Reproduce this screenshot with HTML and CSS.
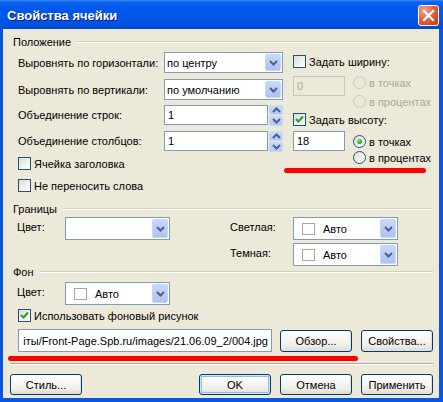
FILE: index.html
```html
<!DOCTYPE html>
<html lang="ru">
<head>
<meta charset="utf-8">
<title>Свойства ячейки</title>
<link rel="stylesheet" href="styles.css">
</head>
<body>
<div class="window">
  <div class="titlebar">
    <span class="title">Свойства ячейки</span>
    <span class="close"><svg width="13" height="13" viewBox="0 0 13 13"><path d="M2 2 L11 11 M11 2 L2 11" stroke="#fff" stroke-width="2.2" stroke-linecap="square"/></svg></span>
  </div>
  <div class="client">
    <section class="group">
      <div class="ghead"><span>Положение</span><i></i></div>
      <div class="pos-body">
        <div class="pos-left">
          <div class="prow r-combo mb6">
            <span class="plabel">Выровнять по горизонтали:</span>
            <div class="combo w119"><span class="val">по центру</span><span class="drop"><svg width="9" height="6" viewBox="0 0 9 6"><path d="M1 1 L4.5 4.5 L8 1" stroke="#4D6185" stroke-width="2" fill="none"/></svg></span></div>
          </div>
          <div class="prow r-combo mb5">
            <span class="plabel">Выровнять по вертикали:</span>
            <div class="combo w119"><span class="val">по умолчанию</span><span class="drop"><svg width="9" height="6" viewBox="0 0 9 6"><path d="M1 1 L4.5 4.5 L8 1" stroke="#4D6185" stroke-width="2" fill="none"/></svg></span></div>
          </div>
          <div class="prow r-spin mb6">
            <span class="plabel">Объединение строк:</span>
            <div class="edit w104">1</div>
            <div class="spin">
              <span class="sbtn"><svg width="9" height="6" viewBox="0 0 9 6"><path d="M1 5 L4.5 1.5 L8 5" stroke="#4D6185" stroke-width="2" fill="none"/></svg></span>
              <span class="sbtn"><svg width="9" height="6" viewBox="0 0 9 6"><path d="M1 1 L4.5 4.5 L8 1" stroke="#4D6185" stroke-width="2" fill="none"/></svg></span>
            </div>
          </div>
          <div class="prow r-spin mb6">
            <span class="plabel">Объединение столбцов:</span>
            <div class="edit w104">1</div>
            <div class="spin">
              <span class="sbtn"><svg width="9" height="6" viewBox="0 0 9 6"><path d="M1 5 L4.5 1.5 L8 5" stroke="#4D6185" stroke-width="2" fill="none"/></svg></span>
              <span class="sbtn"><svg width="9" height="6" viewBox="0 0 9 6"><path d="M1 1 L4.5 4.5 L8 1" stroke="#4D6185" stroke-width="2" fill="none"/></svg></span>
            </div>
          </div>
          <div class="cbrow mb9"><span class="cb"></span><span>Ячейка заголовка</span></div>
          <div class="cbrow"><span class="cb"></span><span>Не переносить слова</span></div>
        </div>
        <div class="pos-right">
          <div class="cbrow mt3"><span class="cb"></span><span>Задать ширину:</span></div>
          <div class="sizeblk mt8">
            <div class="edit small disabled">0</div>
            <div class="radios gap6">
              <div class="rrow disabled"><span class="radio"></span><span>в точках</span></div>
              <div class="rrow disabled"><span class="radio"></span><span>в процентах</span></div>
            </div>
          </div>
          <div class="cbrow mt5"><span class="cb"><svg width="11" height="11" viewBox="0 0 11 11"><path d="M2 5 L4.5 7.5 L9 2.5" stroke="#21A121" stroke-width="2" fill="none"/></svg></span><span>Задать высоту:</span></div>
          <div class="sizeblk mt5">
            <div class="edit small">18</div>
            <div class="radios gap3 pt4">
              <div class="rrow"><span class="radio on"><i></i></span><span>в точках</span></div>
              <div class="rrow"><span class="radio"></span><span>в процентах</span></div>
            </div>
          </div>
        </div>
      </div>
    </section>

    <section class="group g-borders">
      <div class="ghead"><span>Границы</span><i></i></div>
      <div class="bd-grid">
        <span class="glabel">Цвет:</span>
        <div class="combo tall"><span class="val"></span><span class="drop"><svg width="9" height="6" viewBox="0 0 9 6"><path d="M1 1 L4.5 4.5 L8 1" stroke="#4D6185" stroke-width="2" fill="none"/></svg></span></div>
        <span></span>
        <span class="glabel">Светлая:</span>
        <div class="combo tall"><span class="val"><span class="swatch"></span>Авто</span><span class="drop"><svg width="9" height="6" viewBox="0 0 9 6"><path d="M1 1 L4.5 4.5 L8 1" stroke="#4D6185" stroke-width="2" fill="none"/></svg></span></div>
        <span></span><span></span><span></span>
        <span class="glabel">Темная:</span>
        <div class="combo tall"><span class="val"><span class="swatch"></span>Авто</span><span class="drop"><svg width="9" height="6" viewBox="0 0 9 6"><path d="M1 1 L4.5 4.5 L8 1" stroke="#4D6185" stroke-width="2" fill="none"/></svg></span></div>
      </div>
    </section>

    <section class="group g-bg">
      <div class="ghead"><span>Фон</span><i></i></div>
      <div class="bg-color">
        <span class="glabel">Цвет:</span>
        <div class="combo tall"><span class="val"><span class="swatch"></span>Авто</span><span class="drop"><svg width="9" height="6" viewBox="0 0 9 6"><path d="M1 1 L4.5 4.5 L8 1" stroke="#4D6185" stroke-width="2" fill="none"/></svg></span></div>
      </div>
      <div class="cbrow mt4 pl5"><span class="cb"><svg width="11" height="11" viewBox="0 0 11 11"><path d="M2 5 L4.5 7.5 L9 2.5" stroke="#21A121" stroke-width="2" fill="none"/></svg></span><span>Использовать фоновый рисунок</span></div>
      <div class="pathrow">
        <div class="edit path"><span>іты/Front-Page.Spb.ru/images/21.06.09_2/004.jpg</span></div>
        <button class="btn">Обзор...</button>
        <button class="btn">Свойства...</button>
      </div>
    </section>

    <div class="sep"></div>
    <div class="btnrow">
      <button class="btn">Стиль...</button>
      <button class="btn default push">OK</button>
      <button class="btn">Отмена</button>
      <button class="btn">Применить</button>
    </div>
  </div>
  <div class="mark mark1"></div>
  <div class="mark mark2"></div>
</div>
</body>
</html>
```
FILE: styles.css
```css
html, body {
  margin: 0;
  padding: 0;
  background: #ECE9D8;
}
body {
  font: 11px "Liberation Sans", Arial, sans-serif;
  color: #000;
}
.window {
  position: relative;
  width: 443px;
  height: 402px;
  display: flex;
  flex-direction: column;
}
.titlebar {
  flex: none;
  height: 29px;
  box-sizing: border-box;
  display: flex;
  align-items: center;
  justify-content: space-between;
  padding: 0 4px 0 7px;
  background: linear-gradient(180deg, #3D8CF5 0px, #0C63EF 2px, #0058EC 8px, #0156E8 18px, #0150DC 26px, #0046C8 29px);
}
.title {
  color: #fff;
  font: bold 13px "Liberation Sans", Arial, sans-serif;
  text-shadow: 1px 1px 0 #0A1883;
  margin-top: 1px;
}
.close {
  width: 21px;
  height: 21px;
  box-sizing: border-box;
  border: 1px solid #fff;
  border-radius: 3px;
  display: flex;
  align-items: center;
  justify-content: center;
  background: radial-gradient(circle at 30% 25%, #F2A78E 0%, #E46C47 40%, #D04A24 75%, #BF3C18 100%);
  margin-top: 1px;
}
.client {
  flex: 1;
  box-sizing: border-box;
  background: #ECE9D8;
  border-style: solid;
  border-color: #0856E0;
  border-width: 0 4px 4px 3px;
  padding: 6px 6px 0 10px;
  display: flex;
  flex-direction: column;
}
.ghead {
  display: flex;
  align-items: center;
  height: 13px;
  gap: 6px;
}
.ghead i {
  flex: 1;
  height: 0;
  border-top: 1px solid #D0D0BF;
  border-bottom: 1px solid #fff;
}
.pos-body {
  display: flex;
  margin-top: 4px;
  padding-left: 5px;
}
.pos-left {
  width: 265px;
  display: flex;
  flex-direction: column;
}
.pos-right {
  margin-left: 10px;
  display: flex;
  flex-direction: column;
}
.prow {
  display: flex;
  align-items: center;
}
.r-combo { height: 21px; }
.r-spin { height: 20px; }
.plabel { width: 146px; flex: none; }
.mb5 { margin-bottom: 5px; }
.mb6 { margin-bottom: 6px; }
.mb9 { margin-bottom: 9px; }
.mt3 { margin-top: 3px; }
.mt4 { margin-top: 4px; }
.mt5 { margin-top: 5px; }
.mt8 { margin-top: 8px; }
.pl5 { padding-left: 5px; }

.combo {
  position: relative;
  box-sizing: border-box;
  height: 21px;
  border: 1px solid #7F9DB9;
  background: #fff;
  display: flex;
  align-items: center;
}
.combo.w119 { width: 119px; }
.combo.tall { height: 23px; width: 105px; }
.combo .val {
  flex: 1;
  padding-left: 2px;
  display: flex;
  align-items: center;
  white-space: nowrap;
}
.combo.tall .val { padding-left: 8px; }
.drop {
  flex: none;
  width: 16px;
  align-self: stretch;
  margin: 1px;
  box-sizing: border-box;
  border: 1px solid #C6D5FC;
  border-radius: 2px;
  background: linear-gradient(180deg, #C9D8FD 0%, #B6C9F6 60%, #AFC3F3 100%);
  display: flex;
  align-items: center;
  justify-content: center;
}
.swatch {
  width: 13px;
  height: 12px;
  box-sizing: border-box;
  border: 1px solid #ACA899;
  background: #fff;
  margin-right: 8px;
}
.edit {
  box-sizing: border-box;
  height: 20px;
  border: 1px solid #7F9DB9;
  background: #fff;
  padding-left: 3px;
  display: flex;
  align-items: center;
  white-space: nowrap;
}
.edit.w104 { width: 104px; }
.edit.small { width: 52px; flex: none; }
.edit.disabled {
  background: #ECE9D8;
  border-color: #C9C7BA;
  color: #ACA899;
}
.spin {
  margin-left: 1px;
  width: 14px;
  height: 21px;
  display: flex;
  flex-direction: column;
  gap: 1px;
  align-self: flex-start;
}
.sbtn {
  flex: 1;
  box-sizing: border-box;
  border: 1px solid #C6D5FC;
  border-radius: 2px;
  background: linear-gradient(180deg, #C9D8FD 0%, #B4C7F5 100%);
  display: flex;
  align-items: center;
  justify-content: center;
}
.cbrow {
  display: flex;
  align-items: center;
  height: 13px;
  gap: 3px;
}
.cb {
  width: 13px;
  height: 13px;
  flex: none;
  box-sizing: border-box;
  border: 1px solid #1C5180;
  background: linear-gradient(135deg, #DCDBD5 0%, #F2F2EF 60%, #FFFFFF 100%);
  display: flex;
  align-items: center;
  justify-content: center;
}
.sizeblk {
  display: flex;
  align-items: flex-start;
}
.radios {
  margin-left: 8px;
  display: flex;
  flex-direction: column;
}
.gap6 { gap: 6px; }
.gap3 { gap: 3px; }
.pt4 { padding-top: 4px; }
.rrow {
  display: flex;
  align-items: center;
  height: 13px;
  gap: 3px;
}
.radio {
  width: 13px;
  height: 13px;
  box-sizing: border-box;
  border: 1px solid #1C5180;
  border-radius: 50%;
  background: linear-gradient(135deg, #DCDBD5 0%, #F4F4F1 60%, #fff 100%);
  display: flex;
  align-items: center;
  justify-content: center;
}
.radio.on i {
  width: 5px;
  height: 5px;
  border-radius: 50%;
  background: radial-gradient(circle at 35% 35%, #7BE37B, #21A121 70%);
}
.rrow.disabled { color: #ACA899; }
.rrow.disabled .radio {
  border-color: #CAC8BB;
  background: #ECE9D8;
}
.g-borders { margin-top: 10px; }
.bd-grid {
  margin-top: 2px;
  padding-left: 4px;
  display: grid;
  grid-template-columns: 48px 105px 60px 63px 105px;
  grid-template-rows: 23px 23px;
  row-gap: 3px;
  align-items: center;
}
.glabel { margin-top: -3px; }
.g-bg { margin-top: -1px; }
.bg-color {
  margin-top: 4px;
  padding-left: 4px;
  display: grid;
  grid-template-columns: 48px 105px;
  align-items: center;
}
.pathrow {
  margin-top: 7px;
  padding-left: 5px;
  display: flex;
  align-items: center;
}
.edit.path {
  width: 254px;
  height: 23px;
  justify-content: flex-end;
  overflow: hidden;
  padding: 0 3px 0 1px;
}
.edit.path span { flex: none; }
.btn {
  box-sizing: border-box;
  width: 72px;
  height: 22px;
  padding: 0;
  font: 11px "Liberation Sans", Arial, sans-serif;
  color: #000;
  border: 1px solid #003C74;
  border-radius: 3px;
  background: linear-gradient(180deg, #FFFFFF 0%, #F6F6F3 40%, #EEEDE7 75%, #DCD8CC 100%);
  box-shadow: inset -1px -1px 0 #E3E0D6;
}
.pathrow .btn { margin-left: 8px; }
.pathrow .btn + .btn { margin-left: 9px; }
.btn.default {
  box-shadow: inset 0 0 0 1px #CEE7FF, inset 0 0 0 2px #98B8EA;
}
.sep {
  margin: 11px 0 0 -3px;
  height: 0;
  border-top: 1px solid #ACA899;
  border-bottom: 1px solid #fff;
}
.btnrow {
  margin: 9px 0 0 -3px;
  display: flex;
  gap: 9px;
}
.btnrow .btn { height: 21px; }
.push { margin-left: auto; }
.mark {
  position: absolute;
  height: 5px;
  border-radius: 3px;
  background: #FF0000;
}
.mark1 { left: 284px; top: 168px; width: 142px; }
.mark2 { left: 8px; top: 356px; width: 350px; }
```
